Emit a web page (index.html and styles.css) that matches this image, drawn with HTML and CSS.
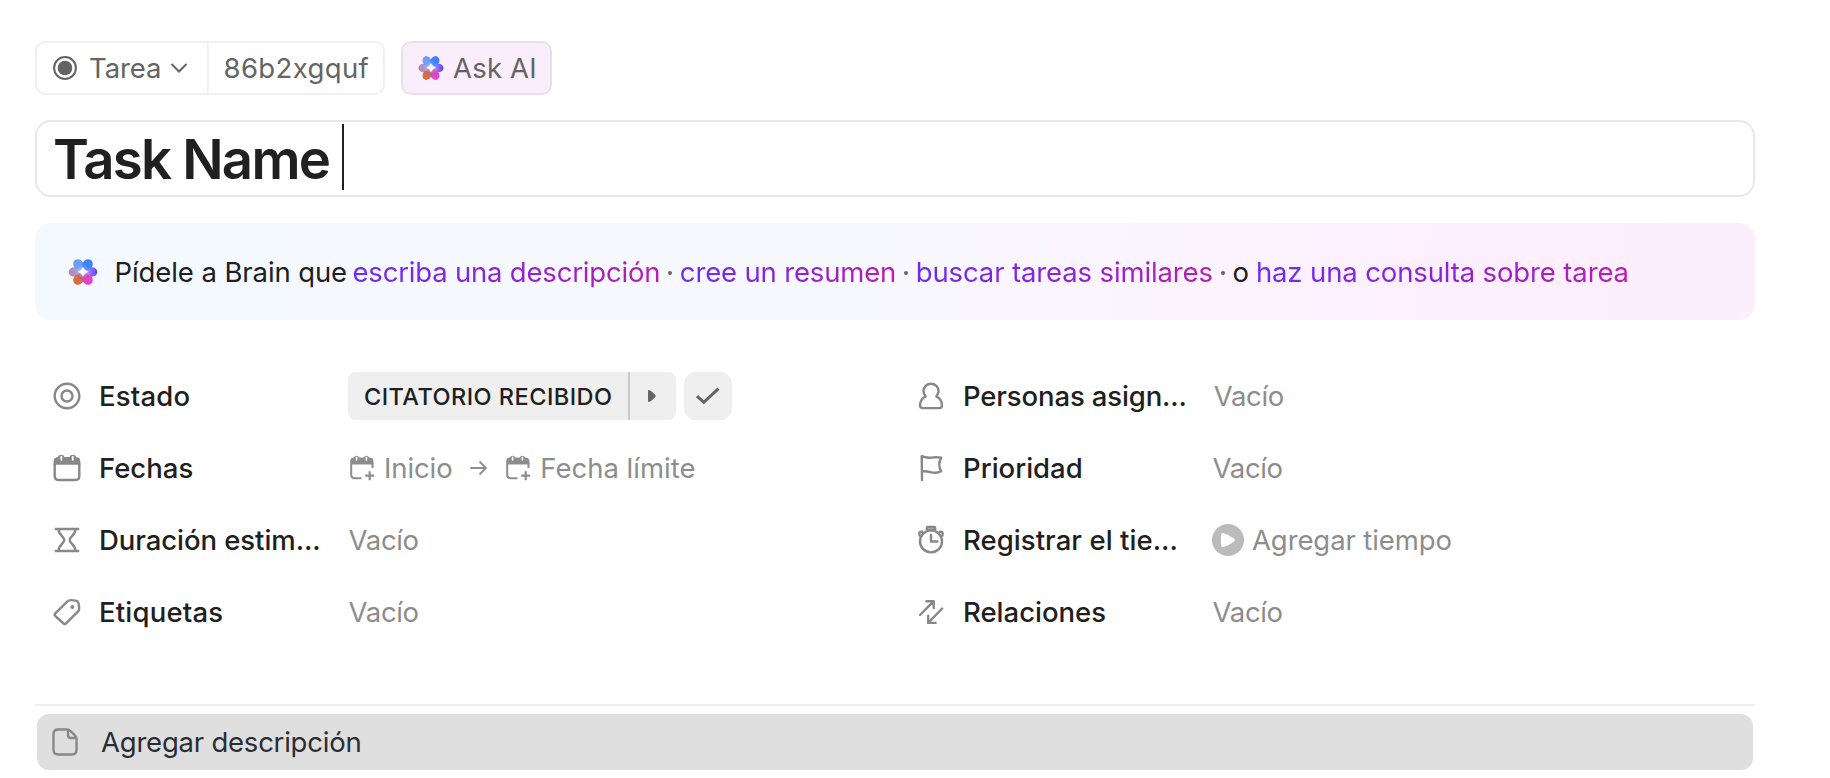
FILE: index.html
```html
<!DOCTYPE html>
<html lang="es">
<head>
<meta charset="utf-8">
<title>Task Name</title>
<link rel="stylesheet" href="styles.css">
</head>
<body>
<svg width="0" height="0" class="defs" aria-hidden="true">
  <defs>
    <filter id="soft" x="-20%" y="-20%" width="140%" height="140%"><feGaussianBlur stdDeviation="0.5"/></filter>
    <radialGradient id="glow"><stop offset="0" stop-color="#fff"/><stop offset=".35" stop-color="#fff" stop-opacity=".5"/><stop offset="1" stop-color="#fff" stop-opacity="0"/></radialGradient>
    <linearGradient id="petalL" x1="0" x2="1"><stop offset="0" stop-color="#b08aa8"/><stop offset="1" stop-color="#a99be8"/></linearGradient>
    <linearGradient id="petalR" x1="0" x2="1"><stop offset="0" stop-color="#9d92fb"/><stop offset="1" stop-color="#6a3cf6"/></linearGradient>
    <symbol id="brain" viewBox="0 0 28 28" preserveAspectRatio="none">
      <g filter="url(#soft)">
        <circle cx="14" cy="14" r="8.5" fill="#a97ad0"/>
        <ellipse cx="5.8" cy="14" rx="5.2" ry="4.7" fill="url(#petalL)"/>
        <ellipse cx="22.2" cy="14" rx="5.2" ry="4.7" fill="url(#petalR)"/>
        <ellipse cx="9.8" cy="21.4" rx="4.7" ry="5.6" transform="rotate(30 9.8 21.4)" fill="#d8703c"/>
        <ellipse cx="18.2" cy="21.4" rx="4.7" ry="5.6" transform="rotate(-30 18.2 21.4)" fill="#ea3fd0"/>
        <ellipse cx="9.8" cy="6.6" rx="4.7" ry="5.6" transform="rotate(-30 9.8 6.6)" fill="#6a9ef7"/>
        <ellipse cx="18.2" cy="6.6" rx="4.7" ry="5.6" transform="rotate(30 18.2 6.6)" fill="#3f83f8"/>
        <ellipse cx="14" cy="18" rx="5" ry="3.6" fill="#b05a90" opacity=".7"/>
      </g>
      <circle cx="14" cy="13.6" r="7.5" fill="url(#glow)" opacity=".5"/>
      <path d="M14 9Q15.6 12.2 18.8 13.8Q15.6 15.4 14 18.6Q12.4 15.4 9.2 13.8Q12.4 12.2 14 9Z" fill="#fbf5fe"/>
    </symbol>
    <symbol id="cal-plus" viewBox="0 0 26 26">
      <path d="M2.2 9V19.5Q2.2 23.2 5.5 23.2H12.5M23.5 8V13" fill="none" stroke="currentColor" stroke-width="2"/>
      <path d="M1.2 9.6V6.5Q1.2 2.8 5 2.6Q5.3.7 7.6.7T10.2 2.6H14.8Q15.1.7 17.4.7T20 2.6Q24.5 2.8 24.5 6.5V9.6Z" fill="currentColor"/>
      <path d="M7.6 2.4V5M17.4 2.4V5" stroke="#fff" stroke-width="1.6" stroke-linecap="round"/>
      <path d="M20.7 16.2V25.2M16.2 20.7H25.2" stroke="currentColor" stroke-width="2.2"/>
    </symbol>
  </defs>
</svg>
<main class="task">
  <div class="toolbar">
    <div class="chips">
      <div class="chip type">
        <svg class="radio" width="24" height="24" viewBox="0 0 24 24"><circle cx="12" cy="12" r="10.9" fill="none" stroke="currentColor" stroke-width="2"/><circle cx="12" cy="12" r="7.3" fill="currentColor"/></svg>
        <span class="t-tarea">Tarea</span>
        <svg class="chev" width="18" height="12" viewBox="0 0 18 12"><path d="M1.5 2L9 9.5L16.5 2" fill="none" stroke="currentColor" stroke-width="2"/></svg>
      </div>
      <div class="chip id"><span class="t-id">86b2xgquf</span></div>
    </div>
    <div class="ask"><svg width="26" height="26"><use href="#brain"/></svg><span class="t-ask">Ask AI</span></div>
  </div>

  <div class="title"><span class="title-text">Task Name</span><i class="caret"></i></div>

  <div class="brain">
    <svg class="brain-icon" width="30" height="28"><use href="#brain"/></svg>
    <span class="lead">Pídele a Brain que</span>
    <span class="link l1">escriba una descripción</span><span class="dot"></span>
    <span class="link l2">cree un resumen</span><span class="dot"></span>
    <span class="link l3">buscar tareas similares</span><span class="dot"></span>
    <span class="or">o</span>
    <span class="link l4">haz una consulta sobre tarea</span>
  </div>

  <div class="fields">
    <div class="field">
      <svg class="icon" viewBox="0 0 28 28"><circle cx="14" cy="14" r="12.3"/><circle cx="14" cy="14" r="5.5"/></svg>
      <span class="label f1">Estado</span>
      <div class="status"><div class="status-name"><span class="t-status">CITATORIO RECIBIDO</span></div><div class="status-next"><svg width="10" height="14" viewBox="0 0 10 14"><path d="M1 2.2Q1 .6 2.6 1.3Q6 3 8.3 5.9Q9.2 7 8.3 8.1Q6 11 2.6 12.7Q1 13.4 1 11.8Z" fill="currentColor"/></svg></div></div>
      <div class="done"><svg width="26" height="20" viewBox="0 0 26 20"><path d="M2 10.2L8.8 16.3L23.5 2.6" fill="none" stroke="currentColor" stroke-width="3"/></svg></div>
    </div>
    <div class="field">
      <svg class="icon" viewBox="0 0 28 28"><path d="M1.7 10V22Q1.7 26 5.5 26H22.5Q26.3 26 26.3 22V10"/><path class="fill" d="M.7 10.8V7Q.7 3.4 5 3Q5.4.7 8.2.7T11.4 3H16.6Q17 .7 19.8.7T23 3Q27.3 3.4 27.3 7V10.8Z"/><path class="cut" d="M8.3 3V5.8M19.7 3V5.8"/></svg>
      <span class="label f2">Fechas</span>
      <div class="dates"><svg width="26" height="26"><use href="#cal-plus"/></svg><span class="t-start">Inicio</span>
        <svg class="arrow" width="18" height="16" viewBox="0 0 18 16"><path d="M.3 8H16M9.5 1.5L16 8L9.5 14.5" fill="none" stroke="currentColor" stroke-width="1.8"/></svg>
        <svg width="26" height="26"><use href="#cal-plus"/></svg><span class="t-due">Fecha límite</span></div>
    </div>
    <div class="field">
      <svg class="icon" viewBox="0 0 28 28"><path d="M2.8 3H25.2M2.8 25H25.2M5.5 3C5.5 9 11.3 10.5 11.3 14S5.5 19 5.5 25M22.5 3C22.5 9 16.7 10.5 16.7 14S22.5 19 22.5 25"/></svg>
      <span class="label f3">Duración estim...</span><span class="value">Vacío</span>
    </div>
    <div class="field">
      <svg class="icon" viewBox="0 0 28 28"><path d="M2.3 15.3L14.2 3.6Q15.8 2 18 2.1L22.5 2.6Q25.2 2.9 25.6 5.6L26.2 10Q26.4 12.2 24.9 13.7L13.3 25.2Q11.7 26.8 10.1 25.2L2.3 18Q1 16.6 2.3 15.3Z"/><circle class="fill" cx="19.3" cy="9" r="2"/></svg>
      <span class="label f4">Etiquetas</span><span class="value">Vacío</span>
    </div>

    <div class="field">
      <svg class="icon" viewBox="0 0 28 28"><path d="M14 1.8C18.2 1.8 21.5 5 21.5 9Q21.5 12.3 19.3 14.3C22.5 15.8 24.8 19.4 25 23.3Q25 26 22.3 26.1H5.7Q3 26 3 23.3C3.2 19.4 5.5 15.8 8.7 14.3Q6.5 12.3 6.5 9C6.5 5 9.8 1.8 14 1.8Z"/></svg>
      <span class="label f5">Personas asign...</span><span class="value first">Vacío</span>
    </div>
    <div class="field">
      <svg class="icon" viewBox="0 0 28 28"><path d="M5 26L4.7 2.2Q9.5 4.3 14.5 3.6T24.2 3.6Q20.3 10.5 24.2 17.2Q19.5 19.6 14.5 18.3T4.9 17.3"/></svg>
      <span class="label f6">Prioridad</span><span class="value">Vacío</span>
    </div>
    <div class="field">
      <svg class="icon" viewBox="0 0 28 28"><circle cx="14" cy="15.4" r="11"/><path d="M14 8.8V15.5H20.5M9.8 3.6V1.9Q9.8 1 10.8 1H17.2Q18.2 1 18.2 1.9V3.6Z"/><path d="M2.6 9.5Q1.2 5.5 5.2 5.7M25.4 9.5Q26.8 5.5 22.8 5.7"/></svg>
      <span class="label f7">Registrar el tie...</span>
      <div class="timer"><svg width="32" height="32" viewBox="0 0 32 32"><circle cx="16" cy="16" r="16" fill="#bbb"/><path d="M9 11.2Q9 8.2 12 9.2Q17.5 11 21.8 14.3Q24 16 21.8 17.7Q17.5 21 12 22.8Q9 23.8 9 20.8Z" fill="#fff"/></svg><span class="t-time">Agregar tiempo</span></div>
    </div>
    <div class="field">
      <svg class="icon" viewBox="0 0 28 28"><path d="M3 17L16.5 3.4M9.4 3.2H16.7V10M25.2 10.5L11.4 24.6M11.2 17.8V24.9H18.6"/></svg>
      <span class="label f8">Relaciones</span><span class="value">Vacío</span>
    </div>
  </div>

  <div class="describe-wrap">
    <div class="describe">
      <svg width="26" height="28" viewBox="0 0 26 28"><path d="M6 1.5H14.5Q17 1.5 18.8 3.3L22.7 7.2Q24.5 9 24.5 11.5V22Q24.5 26.5 20 26.5H6Q1.5 26.5 1.5 22V6Q1.5 1.5 6 1.5ZM16 2V7Q16 10 19 10H24" fill="none" stroke="#888" stroke-width="2.4" stroke-linejoin="round"/></svg>
      <span class="t-desc">Agregar descripción</span>
    </div>
  </div>
</main>
</body>
</html>
```
FILE: styles.css
```css
* { box-sizing: border-box; }
body { margin: 0; background: #fff; font-family: Inter, "Liberation Sans", sans-serif; font-size: 27.5px; color: #202020; white-space: nowrap; }
svg { display: block; flex: none; overflow: visible; }
.defs { position: absolute; }
.task { width: 1830px; height: 778px; padding: 41px 75px 0 35px; display: flex; flex-direction: column; overflow: hidden; }

.toolbar { display: flex; gap: 16px; height: 54px; color: #646464; }
.chips { display: flex; width: 350px; border: 2px solid #f0f0f0; border-radius: 10px; }
.chip { display: flex; align-items: center; }
.type { width: 172px; padding-left: 16px; border-right: 2px solid #f0f0f0; }
.t-tarea { width: 93px; padding-left: 12px; letter-spacing: -0.1px; }
.id { padding-left: 14.5px; }
.t-id { letter-spacing: 0.38px; }
.ask { display: flex; align-items: center; width: 151px; padding-left: 15px; border: 2px solid #eadfec; border-radius: 10px; background: #faeefc; }
.t-ask { padding-left: 9px; letter-spacing: 0.2px; }

.title { display: flex; align-items: center; height: 77px; margin-top: 25px; padding-left: 16px; border: 2px solid #e8e8e8; border-radius: 16px; }
.title-text { width: 289px; font-size: 54.5px; font-weight: 600; letter-spacing: -1.75px; }
.caret { width: 2px; height: 66px; background: #202020; margin-bottom: 3px; }

.brain { display: flex; align-items: center; height: 97px; margin-top: 26px; padding-left: 33px; border-radius: 16px; background: linear-gradient(100deg, #f3faff, #f9f8ff 50%, #fdeffe 85%, #fceefd); }
.lead { width: 237.9px; margin-left: 16.6px; letter-spacing: -0.1px; }
.link { color: transparent; background: linear-gradient(90deg, #6b2cf5, #8f22d6 50%, #b81fae); -webkit-background-clip: text; background-clip: text; }
.l1 { letter-spacing: -0.19px; }
.l2 { letter-spacing: -0.16px; }
.l3, .l4 { letter-spacing: -0.13px; }
.dot { width: 4px; height: 4px; margin: 2px 7.4px 0 8.2px; border-radius: 2px; background: #646464; }
.or { margin-right: 7px; }

.fields { display: grid; grid-template-columns: 864px 1fr; grid-template-rows: repeat(4, 72px); grid-auto-flow: column; height: 288px; margin-top: 40px; padding-left: 18px; }
.field { display: flex; align-items: center; }
.icon { width: 28px; height: 28px; fill: none; stroke: #888; stroke-width: 2.4; stroke-linecap: round; stroke-linejoin: round; }
.icon .fill { fill: #888; stroke: none; }
.icon .cut { stroke: #fff; stroke-width: 1.8; }
.label { width: 249px; margin-left: 18px; font-weight: 500; }
.f1 { letter-spacing: 0.2px; }
.f3 { letter-spacing: -0.06px; }
.f4 { letter-spacing: 0.2px; }
.f5 { letter-spacing: -0.13px; }
.f7 { letter-spacing: 0.06px; }
.value, .dates, .timer { color: #8d8d8d; }
.value { padding-left: 0.6px; letter-spacing: -0.35px; }
.first { padding-left: 1.8px; }
.status { display: flex; width: 328px; height: 48px; border-radius: 8px; background: #efefef; overflow: hidden; }
.status-name { display: flex; align-items: center; width: 282px; padding-left: 16px; font-size: 23.5px; font-weight: 500; letter-spacing: 0.47px; border-right: 2px solid #c9c9c9; }
.status-next { display: flex; align-items: center; padding-left: 17px; color: #646464; }
.done { display: grid; place-items: center; width: 48px; height: 48px; margin-left: 8px; border-radius: 12px; background: #efefef; color: #646464; }
.dates, .timer { display: flex; align-items: center; }
.dates { padding-left: 1px; }
.t-start { margin-left: 9px; width: 68px; letter-spacing: -0.1px; }
.arrow { margin: 0 17px 0 18px; }
.t-due { margin-left: 9.3px; }
.t-time { margin-left: 8px; letter-spacing: -0.1px; }

.describe-wrap { margin-top: 56px; padding: 8px 2px 0; border-top: 2px solid #f0f0f0; }
.describe { display: flex; align-items: center; height: 56px; padding-left: 15px; border-radius: 12px; background: #dfdfdf; color: #2a2e34; }
.t-desc { padding-left: 23px; letter-spacing: -0.22px; }
```
